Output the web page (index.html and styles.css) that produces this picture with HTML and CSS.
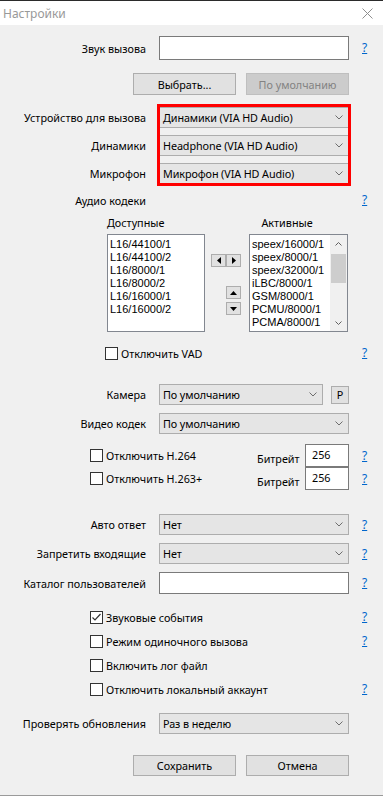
FILE: index.html
```html
<!DOCTYPE html>
<html lang="ru">
<head>
    <meta charset="UTF-8">
    <meta name="viewport" content="width=device-width, initial-scale=1.0">
    <title>Настройки</title>
    <link rel="stylesheet" href="styles.css">
</head>
<body>
<div class="window">
    <div class="titlebar">
        <span class="title">Настройки</span>
        <svg class="close" width="11" height="11" viewBox="0 0 11 11"><path d="M0.5 0.5L10.5 10.5M10.5 0.5L0.5 10.5" stroke="#8e8e8e" stroke-width="1"/></svg>
    </div>

    <div class="content">
        <div class="row sound-row">
            <label>Звук вызова</label>
            <div class="edit"></div>
            <a class="help" href="#">?</a>
        </div>

        <div class="button-row choose-row">
            <button class="btn">Выбрать...</button>
            <button class="btn" disabled>По умолчанию</button>
        </div>

        <div class="device-group">
            <div class="row">
                <label>Устройство для вызова</label>
                <div class="combo"><span>Динамики (VIA HD Audio)</span><svg width="8" height="5" viewBox="0 0 8 5"><path d="M0.5 0.5L4 4L7.5 0.5" fill="none" stroke="#6d6d6d"/></svg></div>
            </div>
            <div class="row">
                <label>Динамики</label>
                <div class="combo"><span>Headphone (VIA HD Audio)</span><svg width="8" height="5" viewBox="0 0 8 5"><path d="M0.5 0.5L4 4L7.5 0.5" fill="none" stroke="#6d6d6d"/></svg></div>
            </div>
            <div class="row">
                <label>Микрофон</label>
                <div class="combo"><span>Микрофон (VIA HD Audio)</span><svg width="8" height="5" viewBox="0 0 8 5"><path d="M0.5 0.5L4 4L7.5 0.5" fill="none" stroke="#6d6d6d"/></svg></div>
            </div>
            <div class="highlight"></div>
        </div>

        <div class="row codec-title">
            <label>Аудио кодеки</label>
            <span></span>
            <a class="help" href="#">?</a>
        </div>

        <div class="codec-heads">
            <span class="head-left">Доступные</span>
            <span class="head-right">Активные</span>
        </div>

        <div class="codecs">
            <div class="listbox">
                <div>L16/44100/1</div>
                <div>L16/44100/2</div>
                <div>L16/8000/1</div>
                <div>L16/8000/2</div>
                <div>L16/16000/1</div>
                <div>L16/16000/2</div>
            </div>
            <div class="movers">
                <div class="mover-pair">
                    <span class="mini"><svg width="4" height="7" viewBox="0 0 4 7"><path d="M4 0L0 3.5L4 7Z" fill="#000"/></svg></span>
                    <span class="mini"><svg width="4" height="7" viewBox="0 0 4 7"><path d="M0 0L4 3.5L0 7Z" fill="#000"/></svg></span>
                </div>
                <div class="mover-stack">
                    <span class="mini"><svg width="7" height="4" viewBox="0 0 7 4"><path d="M0 4L3.5 0L7 4Z" fill="#000"/></svg></span>
                    <span class="mini"><svg width="7" height="4" viewBox="0 0 7 4"><path d="M0 0L3.5 4L7 0Z" fill="#000"/></svg></span>
                </div>
            </div>
            <div class="listbox active-list">
                <div class="items">
                    <div>speex/16000/1</div>
                    <div>speex/8000/1</div>
                    <div>speex/32000/1</div>
                    <div>iLBC/8000/1</div>
                    <div>GSM/8000/1</div>
                    <div>PCMU/8000/1</div>
                    <div>PCMA/8000/1</div>
                </div>
                <div class="scrollbar">
                    <span class="arrow"><svg width="7" height="4" viewBox="0 0 7 4"><path d="M0.5 3.5L3.5 0.5L6.5 3.5" fill="none" stroke="#606060"/></svg></span>
                    <span class="thumb"></span>
                    <span class="track"></span>
                    <span class="arrow"><svg width="7" height="4" viewBox="0 0 7 4"><path d="M0.5 0.5L3.5 3.5L6.5 0.5" fill="none" stroke="#606060"/></svg></span>
                </div>
            </div>
        </div>

        <div class="check-row vad-row">
            <span class="check"><span class="box"></span>Отключить VAD</span>
            <a class="help" href="#">?</a>
        </div>

        <div class="row camera-row">
            <label>Камера</label>
            <div class="camera-ctl">
                <div class="combo"><span>По умолчанию</span><svg width="8" height="5" viewBox="0 0 8 5"><path d="M0.5 0.5L4 4L7.5 0.5" fill="none" stroke="#6d6d6d"/></svg></div>
                <button class="btn small">P</button>
            </div>
        </div>

        <div class="row vcodec-row">
            <label>Видео кодек</label>
            <div class="combo"><span>По умолчанию</span><svg width="8" height="5" viewBox="0 0 8 5"><path d="M0.5 0.5L4 4L7.5 0.5" fill="none" stroke="#6d6d6d"/></svg></div>
        </div>

        <div class="bitrate-row first">
            <span class="check"><span class="box"></span>Отключить H.264</span>
            <span class="bitrate-label">Битрейт</span>
            <div class="edit num">256</div>
            <a class="help" href="#">?</a>
        </div>
        <div class="bitrate-row">
            <span class="check"><span class="box"></span>Отключить H.263+</span>
            <span class="bitrate-label">Битрейт</span>
            <div class="edit num">256</div>
            <a class="help" href="#">?</a>
        </div>

        <div class="row answer-row">
            <label>Авто ответ</label>
            <div class="combo"><span>Нет</span><svg width="8" height="5" viewBox="0 0 8 5"><path d="M0.5 0.5L4 4L7.5 0.5" fill="none" stroke="#6d6d6d"/></svg></div>
            <a class="help" href="#">?</a>
        </div>
        <div class="row incoming-row">
            <label>Запретить входящие</label>
            <div class="combo"><span>Нет</span><svg width="8" height="5" viewBox="0 0 8 5"><path d="M0.5 0.5L4 4L7.5 0.5" fill="none" stroke="#6d6d6d"/></svg></div>
            <a class="help" href="#">?</a>
        </div>
        <div class="row catalog-row">
            <label>Каталог пользователей</label>
            <div class="edit"></div>
            <a class="help" href="#">?</a>
        </div>

        <div class="options">
            <div class="check-row">
                <span class="check"><span class="box checked"><svg width="11" height="11" viewBox="0 0 11 11"><path d="M1.5 5.5L4 8L9.5 2" fill="none" stroke="#333" stroke-width="1.2"/></svg></span>Звуковые события</span>
                <a class="help" href="#">?</a>
            </div>
            <div class="check-row">
                <span class="check"><span class="box"></span>Режим одиночного вызова</span>
                <a class="help" href="#">?</a>
            </div>
            <div class="check-row">
                <span class="check"><span class="box"></span>Включить лог файл</span>
            </div>
            <div class="check-row">
                <span class="check"><span class="box"></span>Отключить локальный аккаунт</span>
                <a class="help" href="#">?</a>
            </div>
        </div>

        <div class="row update-row">
            <label>Проверять обновления</label>
            <div class="combo"><span>Раз в неделю</span><svg width="8" height="5" viewBox="0 0 8 5"><path d="M0.5 0.5L4 4L7.5 0.5" fill="none" stroke="#6d6d6d"/></svg></div>
        </div>

        <div class="button-row footer-row">
            <button class="btn">Сохранить</button>
            <button class="btn">Отмена</button>
        </div>
    </div>
</div>
</body>
</html>
```

FILE: styles.css
```css
* {
    box-sizing: border-box;
}
body {
    margin: 0;
    font-family: "Noto Sans", "Open Sans", sans-serif;
    font-size: 10.8px;
    color: #000;
    background-color: #f0f0f0;
}
.window {
    width: 383px;
    height: 796px;
    background-color: #f0f0f0;
    border-bottom: 1px solid #9a9a9a;
}
.titlebar {
    height: 25px;
    border-top: 1px solid #2b2b2b;
    background-color: #fff;
    display: flex;
    align-items: center;
    justify-content: space-between;
    padding: 0 10px 0 3px;
}
.title {
    color: #999;
    font-size: 12px;
}

/* label | control | help */
.row {
    display: grid;
    grid-template-columns: 146px 190px 1fr;
    column-gap: 13px;
    align-items: center;
}
.row label {
    text-align: right;
    white-space: nowrap;
}
.help {
    color: #0066cc;
    text-decoration: underline;
    font-size: 12px;
    line-height: 14px;
}
.edit {
    height: 24px;
    background-color: #fff;
    border: 1px solid #7a7a7a;
}
.combo {
    height: 21px;
    background-color: #e5e5e5;
    border: 1px solid #adadad;
    display: flex;
    align-items: center;
    justify-content: space-between;
    padding: 0 5px 0 3px;
    white-space: nowrap;
    letter-spacing: -0.1px;
}
.combo svg {
    flex-shrink: 0;
}
.btn {
    height: 22px;
    font-family: inherit;
    font-size: 10.8px;
    color: #000;
    background-color: #e1e1e1;
    border: 1px solid #adadad;
    padding: 0;
}
.btn:disabled {
    background-color: #cccccc;
    border-color: #bfbfbf;
    color: #838383;
}
.button-row {
    display: flex;
    gap: 10px;
    padding-left: 133px;
}
.button-row .btn {
    width: 103px;
}

.sound-row { margin-top: 11px; }
.choose-row { margin-top: 13px; }

.device-group {
    position: relative;
    margin-top: 9px;
    padding: 3px 0 2px;
    display: flex;
    flex-direction: column;
    gap: 7px;
}
.highlight {
    position: absolute;
    left: 157px;
    top: 0;
    width: 194px;
    height: 82px;
    border: 3px solid #f00;
}

.codec-title {
    margin-top: 6px;
    height: 16px;
}
.codec-heads {
    margin-top: 6px;
    height: 16px;
    display: flex;
    align-items: center;
    padding-left: 107px;
}
.head-right {
    margin-left: 97px;
}
.codecs {
    margin-top: 4px;
    display: flex;
    padding-left: 107px;
}
.listbox {
    width: 98px;
    height: 98px;
    background-color: #fff;
    border: 1px solid #828790;
    padding: 3px 0 0 2px;
    font-family: "Liberation Sans", Arial, sans-serif;
    font-size: 11px;
    line-height: 13px;
    overflow: hidden;
    white-space: nowrap;
}
.movers {
    width: 44px;
    padding-left: 6px;
}
.mini {
    width: 15px;
    height: 13px;
    background-color: #e1e1e1;
    border: 1px solid #adadad;
    display: flex;
    align-items: center;
    justify-content: center;
}
.mover-pair {
    display: flex;
    margin-top: 20px;
}
.mover-stack {
    display: flex;
    flex-direction: column;
    gap: 3px;
    margin: 19px 0 0 15px;
}
.active-list {
    width: 99px;
    display: flex;
    padding: 0;
}
.active-list .items {
    flex: 1;
    padding: 3px 0 0 2px;
    overflow: hidden;
}
.scrollbar {
    width: 17px;
    display: flex;
    flex-direction: column;
    align-items: center;
    background-color: #f0f0f0;
}
.scrollbar .arrow {
    height: 17px;
    display: flex;
    align-items: center;
}
.scrollbar .thumb {
    width: 15px;
    height: 29px;
    margin-top: 2px;
    background-color: #cdcdcd;
}
.scrollbar .track {
    flex: 1;
}

.check {
    display: flex;
    align-items: center;
    white-space: nowrap;
}
.box {
    width: 13px;
    height: 13px;
    border: 1px solid #333;
    background-color: #fff;
    margin-right: 3px;
    flex-shrink: 0;
    display: flex;
    align-items: center;
    justify-content: center;
}
.check-row {
    display: grid;
    grid-template-columns: 1fr 21px;
    align-items: center;
    height: 24px;
    padding-left: 90px;
}
.vad-row {
    margin-top: 13px;
    height: 16px;
    padding-left: 105px;
}

.camera-row { margin-top: 23px; }
.camera-ctl {
    display: flex;
    align-items: center;
    gap: 8px;
}
.camera-ctl .combo {
    width: 164px;
}
.btn.small {
    width: 18px;
    height: 18px;
}
.vcodec-row { margin-top: 8px; }

.bitrate-row {
    display: grid;
    grid-template-columns: 167px 48px 44px 1fr;
    align-items: center;
    padding-left: 90px;
}
.bitrate-row.first { margin-top: 10px; }
.bitrate-row .help { padding-left: 13px; }
.bitrate-label { padding-top: 5px; }
.edit.num {
    height: 23px;
    padding: 3px 0 0 6px;
    line-height: 14px;
}

.answer-row { margin-top: 24px; }
.incoming-row { margin-top: 8px; }
.catalog-row { margin-top: 8px; }
.catalog-row .edit { height: 22px; }
.options { margin-top: 11px; }
.update-row { margin-top: 12px; }
.footer-row { margin-top: 21px; }
.footer-row .btn { height: 21px; }
```
